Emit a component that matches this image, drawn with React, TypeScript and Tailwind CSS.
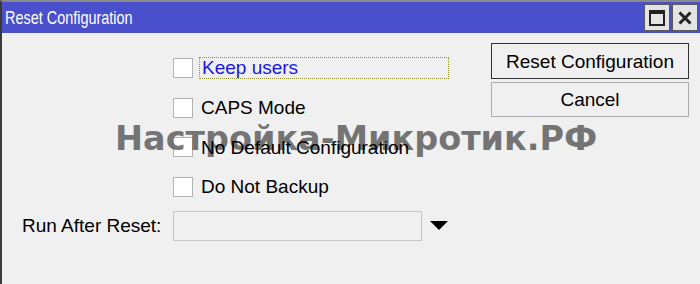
import React from "react";

const options = [
    { label: "Keep users", focused: true },
    { label: "CAPS Mode" },
    { label: "No Default Configuration" },
    { label: "Do Not Backup" },
];

function Checkbox() {
    return <div className="w-[20px] h-[20px] shrink-0 bg-white border border-[#b3b3b3]" />;
}

export default function App() {
    return (
        <div
            className="relative w-[700px] h-[284px] overflow-hidden bg-[#f0f0f0] border-l-2 border-t-2 border-l-[#3a3a3a] border-t-[#8a8a8a] text-black"
            style={{ fontFamily: '"Liberation Sans", Arial, sans-serif' }}
        >
            {/* title bar */}
            <div className="h-[31px] bg-[#4a4fcb] flex items-center justify-between pl-[3px] pr-[2px]">
                <span className="text-white text-[19px] leading-none scale-x-[0.76] origin-left whitespace-nowrap">
                    Reset Configuration
                </span>
                <div className="flex gap-[2px]">
                    <div className="w-[26px] h-[27px] bg-[#e4e4e4] border border-[#5a5a5a] flex items-center justify-center">
                        <svg width="16" height="16" viewBox="0 0 16 16">
                            <rect x="1" y="1" width="14" height="14" fill="none" stroke="#222" strokeWidth="2" />
                            <rect x="1" y="1" width="14" height="3" fill="#222" />
                        </svg>
                    </div>
                    <div className="w-[26px] h-[27px] bg-[#e4e4e4] border border-[#5a5a5a] flex items-center justify-center">
                        <svg width="16" height="16" viewBox="0 0 16 16">
                            <path d="M2.5 2.5 L13.5 13.5 M13.5 2.5 L2.5 13.5" stroke="#222" strokeWidth="3" />
                        </svg>
                    </div>
                </div>
            </div>

            {/* body */}
            <div className="pt-[10px] text-[19px]">
                <div className="flex">
                    <div className="ml-[171px] mt-[5px] flex flex-col">
                        {options.map((o) => (
                            <div key={o.label} className="h-[39.7px] flex items-center">
                                <Checkbox />
                                {o.focused ? (
                                    <div className="ml-[6px] w-[250px] h-[22px] border border-dotted border-[#8f8f3a] pl-[2px] flex items-center text-[#1717ee] leading-none">
                                        {o.label}
                                    </div>
                                ) : (
                                    <div className="relative z-10 ml-[8px] h-[20px] flex items-center leading-none">{o.label}</div>
                                )}
                            </div>
                        ))}
                    </div>
                    <div className="ml-auto mr-[11px] flex flex-col gap-[3px]">
                        <button className="w-[198px] h-[36px] border border-[#333] bg-[#f0f0f0] text-[19px] leading-none">
                            Reset Configuration
                        </button>
                        <button className="w-[198px] h-[35px] border border-[#adadad] bg-[#f0f0f0] text-[19px] leading-none">
                            Cancel
                        </button>
                    </div>
                </div>

                <div className="flex items-center mt-[4px] pl-[20px]">
                    <span className="w-[151px] leading-none">Run After Reset:</span>
                    <div className="w-[249px] h-[30px] border border-[#c6c6c6] bg-[#f0f0f0]" />
                    <svg className="ml-[8px]" width="18" height="9" viewBox="0 0 18 9">
                        <path d="M0 0 H18 L9 9 Z" fill="#000" />
                    </svg>
                </div>
            </div>

            {/* watermark */}
            <div
                className="absolute left-[113px] top-[120px] text-[33.5px] font-bold leading-none text-[#5e5e5e]/85 pointer-events-none whitespace-nowrap"
                style={{ fontFamily: '"DejaVu Sans", Verdana, sans-serif' }}
            >
                Настройка-Микротик.РФ
            </div>
        </div>
    );
}
